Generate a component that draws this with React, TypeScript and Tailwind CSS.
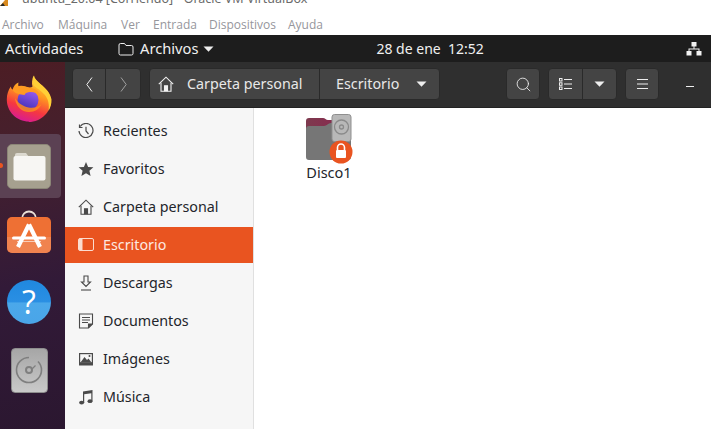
import { Search } from "lucide-react";

function Caret({ className = "" }: { className?: string }) {
  return (
    <svg width="11" height="6" viewBox="0 0 11 6" className={className}>
      <path d="M0.5 0.5h10L5.5 5.8z" fill="currentColor" />
    </svg>
  );
}

function HomeIcon({ color = "#f2f2f2" }: { color?: string }) {
  return (
    <svg width="16" height="16" viewBox="0 0 16 16" fill="none" stroke={color} strokeWidth="1.1">
      <path d="M0.8 8.2 8 1.2l7.2 7" />
      <path d="M3 6.8v8.4h10V6.8" />
      <path d="M6.500 15.200V9.800h3v5.400" fill={color} />
    </svg>
  );
}

function Firefox() {
  return (
    <svg width="46" height="48" viewBox="0 0 46 48">
      <defs>
        <linearGradient id="ffa" x1="0.75" y1="0" x2="0.4" y2="1">
          <stop offset="0" stopColor="#ffe04a" />
          <stop offset="0.4" stopColor="#ff9a20" />
          <stop offset="0.72" stopColor="#f6383f" />
          <stop offset="1" stopColor="#d81b94" />
        </linearGradient>
        <linearGradient id="ffb" x1="0.7" y1="0" x2="0.3" y2="1">
          <stop offset="0" stopColor="#9a5cf0" />
          <stop offset="1" stopColor="#3d2eb5" />
        </linearGradient>
      </defs>
      <path
        d="M23 47.500C10.500 47.500.8 37.500.8 25.500c0-5 1.500-9.500 4-13 .3 1.500.8 2.500 1.700 3.200C7.500 12 10 9.500 12.500 8.500c-.5 2-.3 3.500.5 4.500 2-.8 5-1 7.500 0 3 1.200 5 .5 6-.5-1-3-.5-7 1-11 .5 3 3 5.500 6.500 8.500 5 4 10 9 11 15.500.500 12-9.500 22.500-22.500 22.500z"
        fill="url(#ffa)"
      />
      <path d="M28 1.500c.5 3 3 5.500 6.500 8.500 5 4 10 9 11 15.500.2 4-1 8-3 11.500 1-6 0-12-4-16.500-4-4.500-9-7-11-9-1-3-.5-7 .500-10z" fill="#ffcf36" />
      <circle cx="22" cy="26" r="10.500" fill="url(#ffb)" />
      <path d="M6.500 16c3-4 8-5 13-3.500 5 1.500 9 1.500 12 4.500 2 2 3 4 3 6-3-4-7-5.500-11-5-3 .4-4.500 1.500-5 3-4-.500-9.500-1-12-5z" fill="#ff9a22" />
      <path d="M9 24c.5 8 6.500 14 14 14 6 0 10.500-3 12.500-8-3 3-8 4.500-13 3.500C17 32.500 12 29 9 24z" fill="#ff8a1f" opacity="0.85" />
    </svg>
  );
}

function FilesTile() {
  return (
    <div className="w-[44px] h-[45px] rounded-[5px] bg-[#a6a08f] border border-[#8b8677] flex items-center justify-center">
      <svg width="33" height="29" viewBox="0 0 33 29">
        <path d="M2 3a2 2 0 0 1 2-2h9l3 4H2z" fill="#dcd9cf" />
        <rect x="0.500" y="4" width="32" height="24.500" rx="2" fill="#f7f6f3" />
      </svg>
    </div>
  );
}

function StoreTile() {
  return (
    <svg width="44" height="43" viewBox="0 0 44 43" className="-mt-[6px]">
      <path d="M15 9c0-10 14-10 14 0" fill="none" stroke="#eadfd6" strokeWidth="1.800" />
      <rect x="0" y="7" width="44" height="36" rx="5" fill="#ee7034" />
      <path d="M0 27h44v11a5 5 0 0 1-5 5H5a5 5 0 0 1-5-5z" fill="#f29063" opacity="0.6" />
      <path d="M22 14.500 11 37M22 14.500 33 37" stroke="#fff" strokeWidth="4.200" fill="none" />
      <rect x="5" y="26.500" width="34" height="3" rx="1.500" fill="#fff" />
      <rect x="10" y="31" width="24" height="1" fill="#fff" opacity="0.6" />
    </svg>
  );
}

function HelpTile() {
  return (
    <div className="w-[44px] h-[44px] rounded-full bg-[linear-gradient(#2088df_0%,#2a8fe3_50%,#4ba8ea_52%,#4aa5e8_100%)] flex items-center justify-center">
      <span className="font-['Open_Sans',sans-serif] text-white text-[32px] leading-none">?</span>
    </div>
  );
}

function DiscTile() {
  return (
    <div className="w-[37px] h-[45px] rounded-[4px] bg-[linear-gradient(#a6a6a6,#c9c9c9)] border border-[#8d8d8d] flex items-center justify-center">
      <svg width="28" height="28" viewBox="0 0 28 28" fill="none" stroke="#7f7f7f" strokeWidth="1.600">
        <path d="M14 1.500A12.500 12.500 0 1 0 26.500 14c0-3.500-1.500-6.500-3.500-8.500" />
        <path d="M20.500 9.500 17 13" strokeWidth="1.300" />
        <circle cx="14" cy="14" r="3" strokeWidth="2" />
      </svg>
    </div>
  );
}

function DockItem({ children, active }: { children: React.ReactNode; active?: boolean }) {
  return (
    <div className={"relative h-[64px] w-[61px] shrink-0 pr-[3px] flex items-center justify-center rounded-r-[4px] " + (active ? "bg-[#5b4153]" : "")}>
      {active && <span className="absolute left-0 top-[29px] w-[3px] h-[5px] rounded-r-full bg-[#e95420]" />}
      {children}
    </div>
  );
}

const stroke = "#4a4a4a";

const sideIcons: Record<string, React.ReactNode> = {
  Recientes: (
    <svg width="16" height="16" viewBox="0 0 16 16" fill="none" stroke={stroke} strokeWidth="1.200">
      <path d="M2.200 3.500A7 7 0 1 1 1 8" />
      <path d="M1.500 1.500v3h3" />
      <path d="M8 3.800V8l2.500 3" />
    </svg>
  ),
  Favoritos: (
    <svg width="16" height="16" viewBox="0 0 16 16" fill={stroke}>
      <path d="m8 1 2.100 4.900 5.300.4-4 3.500 1.200 5.200L8 12.200 3.400 15l1.200-5.200-4-3.500 5.300-.4z" />
    </svg>
  ),
  "Carpeta personal": <HomeIcon color={stroke} />,
  Escritorio: (
    <svg width="16" height="16" viewBox="0 0 16 16">
      <rect x="0.500" y="1.500" width="15" height="12" rx="1.500" fill="none" stroke="#fbdccf" strokeWidth="1" />
      <path d="M1 2.500a1 1 0 0 1 1-1h2.500v12H2a1 1 0 0 1-1-1z" fill="#fbdccf" />
    </svg>
  ),
  Descargas: (
    <svg width="16" height="16" viewBox="0 0 16 16" fill="none" stroke={stroke} strokeWidth="1.100">
      <path d="M6 1h4v6h2.500L8 11.500 3.500 7H6z" />
      <path d="M3 15h10" />
    </svg>
  ),
  Documentos: (
    <svg width="16" height="16" viewBox="0 0 16 16" fill="none" stroke={stroke} strokeWidth="1.100">
      <path d="M1.500 1h13v10l-4 4h-9z" />
      <path d="M4 4.500h8M4 7h8M4 9.500h6" />
      <path d="M10.500 15v-4h4" fill={stroke} />
    </svg>
  ),
  Imágenes: (
    <svg width="16" height="16" viewBox="0 0 16 16">
      <rect x="1" y="2" width="14" height="12.500" fill={stroke} />
      <rect x="2.200" y="3.200" width="11.600" height="8" fill="#f6f6f6" />
      <path d="M2.500 11.500 6.500 6l2.500 3 1.500-1.500 3 4z" fill={stroke} />
      <circle cx="11.500" cy="5" r="1" fill={stroke} />
    </svg>
  ),
  Música: (
    <svg width="16" height="16" viewBox="0 0 16 16" fill={stroke}>
      <path d="M5 2.500 14.500 1v11h-1.200V4.200L6.200 5.300V14H5z" />
      <ellipse cx="3.600" cy="13.600" rx="2.500" ry="1.900" />
      <ellipse cx="12" cy="12.200" rx="2.500" ry="1.900" />
    </svg>
  ),
};

const places = ["Recientes", "Favoritos", "Carpeta personal", "Escritorio", "Descargas", "Documentos", "Imágenes", "Música", "Vídeos"];

function Disco() {
  return (
    <svg width="50" height="50" viewBox="0 0 50 50">
      <defs>
        <linearGradient id="dsa" x1="0" y1="0" x2="1" y2="0">
          <stop offset="0" stopColor="#7d3a4e" />
          <stop offset="1" stopColor="#8e2450" />
        </linearGradient>
      </defs>
      <path d="M3 7a3 3 0 0 1 3-3h14c2 0 3 2 5 2h20a3 3 0 0 1 3 3v8H3z" fill="url(#dsa)" />
      <path d="M3 15a3 3 0 0 1 3-3h15c3 0 4-3 7-3h17a3 3 0 0 1 3 3v31a3 3 0 0 1-3 3H6a3 3 0 0 1-3-3z" fill="#767676" />
      <rect x="29" y="0.500" width="19" height="27" rx="2.500" fill="#b8b8b8" stroke="#8f8f8f" />
      <circle cx="38.500" cy="13" r="7" fill="none" stroke="#8a8a8a" strokeWidth="1.300" />
      <circle cx="38.500" cy="13" r="2" fill="none" stroke="#8a8a8a" strokeWidth="1.300" />
      <circle cx="38" cy="38" r="11.500" fill="#e95420" />
      <path d="M34.500 36v-2.500a3.500 3.500 0 0 1 7 0V36" fill="none" stroke="#fff" strokeWidth="1.600" />
      <rect x="33" y="36" width="10" height="8" rx="1" fill="#fff" />
    </svg>
  );
}

function HeadBtn({ children, className = "" }: { children: React.ReactNode; className?: string }) {
  return (
    <div className={"h-[32px] flex items-center justify-center bg-[#444444] border border-[#2a2a2a] rounded-[4px] text-[#f2f2f2] " + className}>
      {children}
    </div>
  );
}

export default function App() {
  return (
    <div className="w-[711px] h-[429px] overflow-hidden flex flex-col bg-white font-['Noto_Sans',sans-serif]">
      {/* virtualbox window chrome */}
      <div className="h-[15px] shrink-0 overflow-hidden flex items-start">
        <svg width="8" height="6" viewBox="0 0 8 6" className="shrink-0">
          <path d="M0 6 5 0h3v6z" fill="#d98a1f" />
          <path d="M0 6 3 3l2 3z" fill="#2a2a2a" />
        </svg>
        <span className="ml-[14px] -mt-[9px] text-[12.500px] leading-[16px] text-[#6a6a6a] whitespace-nowrap">
          ubuntu_20.04 [Corriendo] - Oracle VM VirtualBox
        </span>
      </div>
      <div className="h-[20px] shrink-0 flex items-center pl-[2px] font-['Open_Sans',sans-serif] text-[12px] text-[#96969c]">
        <span className="w-[56px]">Archivo</span>
        <span className="w-[63px]">Máquina</span>
        <span className="w-[32px]">Ver</span>
        <span className="w-[56px]">Entrada</span>
        <span className="w-[79px]">Dispositivos</span>
        <span>Ayuda</span>
      </div>

      {/* gnome top bar */}
      <div className="h-[27px] shrink-0 bg-[#1d1d1d] flex items-center text-[#f0f0f0] text-[14.700px]">
        <span className="ml-[5px] w-[113px]">Actividades</span>
        <svg width="16" height="14" viewBox="0 0 16 14" fill="none" stroke="#eeeeee" strokeWidth="1">
          <path d="M1 3a1.500 1.500 0 0 1 1.500-1.500h4l1.500 2h5.500A1.500 1.500 0 0 1 15 5v6.500A1.500 1.500 0 0 1 13.500 13h-11A1.500 1.500 0 0 1 1 11.500z" />
        </svg>
        <span className="ml-[6px]">Archivos</span>
        <Caret className="ml-[5px] text-[#eeeeee]" />
        <span className="ml-[162px] text-[14px]">28 de ene&nbsp;&nbsp;12:52</span>
        <svg width="16" height="14" viewBox="0 0 16 14" fill="#f2f2f2" className="ml-auto mr-[9px]">
          <rect x="5.500" y="0" width="5" height="4.500" />
          <rect x="0.500" y="9" width="5" height="4.500" />
          <rect x="10.500" y="9" width="5" height="4.500" />
          <path d="M7.500 4h1v2.500h5V9h-1V7.500h-9V9h-1V6.500h5z" />
        </svg>
      </div>

      <div className="flex-1 flex min-h-0">
        {/* dock */}
        <div className="w-[65px] shrink-0 overflow-hidden flex flex-col gap-[4px] pt-[4px] bg-[linear-gradient(170deg,#4c1d24_0%,#45202e_25%,#321a38_60%,#2b1730_100%)]">
          <DockItem><Firefox /></DockItem>
          <DockItem active><FilesTile /></DockItem>
          <DockItem><StoreTile /></DockItem>
          <DockItem><HelpTile /></DockItem>
          <DockItem><DiscTile /></DockItem>
        </div>

        <div className="flex-1 flex flex-col min-w-0">
          {/* header bar */}
          <div className="h-[46px] shrink-0 bg-[#2f2f2f] border-b border-[#232323] flex items-center pl-[7px] pb-[1px] text-[#e8e8e8] text-[14.300px]">
            <div className="w-[69px] h-[32px] flex bg-[#444444] border border-[#2a2a2a] rounded-[4px]">
              <div className="w-[33px] flex items-center justify-center border-r border-[#2a2a2a]">
                <svg width="7" height="15" viewBox="0 0 7 15" fill="none" stroke="#f0f0f0"><path d="M6 .5.800 7.500 6 14.500" /></svg>
              </div>
              <div className="flex-1 flex items-center justify-center">
                <svg width="7" height="15" viewBox="0 0 7 15" fill="none" stroke="#a0a0a0"><path d="M1 .5l5.200 7L1 14.500" /></svg>
              </div>
            </div>
            <div className="ml-[8px] w-[291px] h-[32px] flex items-center bg-[#444444] border border-[#2a2a2a] rounded-[4px]">
              <div className="w-[170px] h-full flex items-center border-r border-[#2a2a2a] pl-[8px]">
                <HomeIcon />
                <span className="ml-[13px]">Carpeta personal</span>
              </div>
              <span className="ml-[16px]">Escritorio</span>
              <Caret className="ml-[17px] text-[#eeeeee]" />
            </div>
            <HeadBtn className="ml-[66px] w-[34px]"><Search size={17} strokeWidth={1.200} /></HeadBtn>
            <div className="ml-[8px] w-[69px] h-[32px] flex bg-[#444444] border border-[#2a2a2a] rounded-[4px]">
              <div className="w-[34px] flex items-center justify-center border-r border-[#2a2a2a]">
                <svg width="13" height="12" viewBox="0 0 13 12" fill="none" stroke="#eeeeee">
                  <rect x="0.500" y="0.500" width="2.500" height="2.500" />
                  <rect x="0.500" y="4.800" width="2.500" height="2.500" />
                  <rect x="0.500" y="9" width="2.500" height="2.500" />
                  <path d="M5 1.500h8M5 6h8M5 10.500h8" />
                </svg>
              </div>
              <div className="flex-1 flex items-center justify-center"><Caret className="text-[#eeeeee]" /></div>
            </div>
            <HeadBtn className="ml-[8px] w-[34px]">
              <svg width="11" height="10" viewBox="0 0 11 10" stroke="#eeeeee"><path d="M0 .5h11M0 5h11M0 9.500h11" /></svg>
            </HeadBtn>
            <span className="ml-[27px] mt-[5px] w-[8px] h-px bg-[#eeeeee]" />
          </div>

          <div className="flex-1 flex min-h-0 bg-white">
            {/* sidebar */}
            <div className="w-[189px] shrink-0 bg-[#f6f6f6] border-r border-[#e0e0e0] overflow-hidden flex flex-col gap-[2px] pt-[5px] text-[14.300px] text-[#23252b]">
              {places.map((p) => (
                <div
                  key={p}
                  className={"h-[36px] shrink-0 flex items-center pl-[13px] pb-[1px] " + (p === "Escritorio" ? "bg-[#e95420] text-[#fde9e0]" : "")}
                >
                  <span className="w-[25px] flex">{sideIcons[p]}</span>
                  {p}
                </div>
              ))}
            </div>
            {/* files */}
            <div className="flex-1 pl-[46px] pt-[6px]">
              <div className="w-[56px] flex flex-col items-center">
                <Disco />
                <span className="ml-[2px] text-[14.500px] leading-[16px] text-[#23252b]">Disco1</span>
              </div>
            </div>
          </div>
        </div>
      </div>
    </div>
  );
}
